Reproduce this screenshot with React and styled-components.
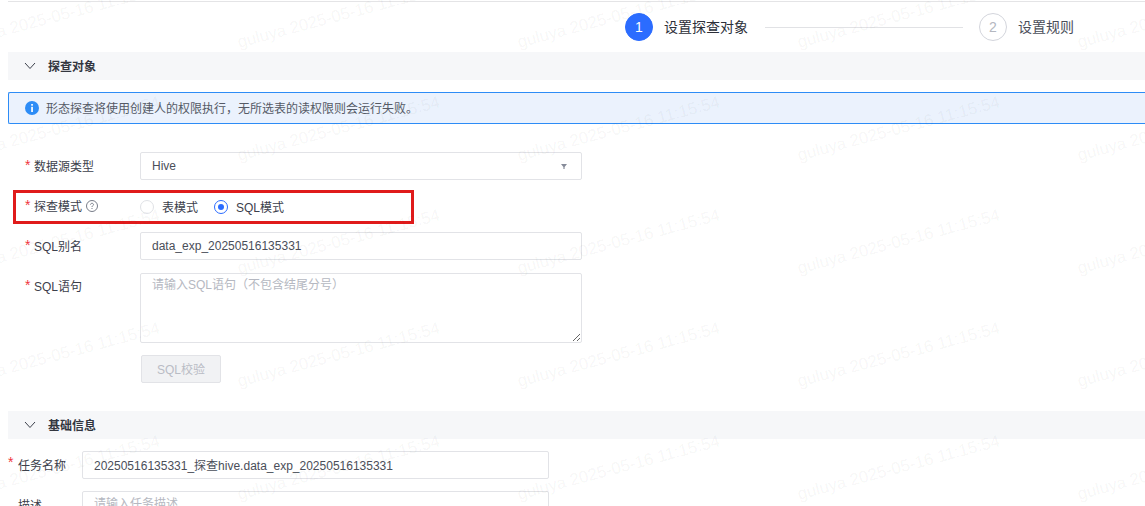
import React from 'react'
import styled, { createGlobalStyle } from 'styled-components'

const WATERMARK_COUNT = 25

const ChevronIcon = () => (
    <svg width="12" height="12" viewBox="0 0 12 12" fill="none">
        <path d="M1 3L6 8.5L11 3" stroke="#3c404b" strokeWidth="1" />
    </svg>
)

const InfoIcon = () => (
    <svg width="14" height="14" viewBox="0 0 14 14">
        <circle cx="7" cy="7" r="7" fill="#2d8cf6" />
        <rect x="6.2" y="3" width="1.7" height="1.7" fill="#fff" />
        <rect x="6.2" y="5.8" width="1.7" height="5.2" fill="#fff" />
    </svg>
)

const HelpIcon = () => (
    <svg width="12" height="12" viewBox="0 0 12 12" fill="none">
        <circle cx="6" cy="6" r="5.5" stroke="#777c88" />
        <path d="M4.5 4.7C4.5 3.9 5.1 3.3 6 3.3C6.9 3.3 7.5 3.9 7.5 4.6C7.5 5.6 6 5.7 6 7" stroke="#777c88" />
        <rect x="5.5" y="8" width="1" height="1" fill="#777c88" />
    </svg>
)

const CaretIcon = () => (
    <svg width="6" height="5" viewBox="0 0 6 5">
        <path d="M0 0H6L3.6 3V5H2.4V3Z" fill="#868b99" />
    </svg>
)

const Section = ({ title }) => (
    <SectionHead>
        <ChevronIcon />
        <SectionTitle>{title}</SectionTitle>
    </SectionHead>
)

const Field = ({ label, children }) => (
    <FormRow>
        <FieldLabel>
            <Star>*</Star>
            {label}
        </FieldLabel>
        {children}
    </FormRow>
)

export default function App() {
    return (
        <Page>
            <GlobalStyle />
            <TopLine />
            <Stepper>
                <StepCircle active>1</StepCircle>
                <StepLabel active>设置探查对象</StepLabel>
                <StepLine />
                <StepCircle>2</StepCircle>
                <StepLabel>设置规则</StepLabel>
            </Stepper>

            <Section title="探查对象" />
            <Alert>
                <InfoIcon />
                <AlertText>形态探查将使用创建人的权限执行，无所选表的读权限则会运行失败。</AlertText>
            </Alert>

            <Form>
                <Field label="数据源类型">
                    <SelectBox>
                        Hive
                        <CaretIcon />
                    </SelectBox>
                </Field>
                <ModeRow>
                    <RaisedLabel>
                        <Star>*</Star>
                        探查模式
                        <HelpWrap><HelpIcon /></HelpWrap>
                    </RaisedLabel>
                    <RadioGroup>
                        <RadioItem><Radio /><RadioText>表模式</RadioText></RadioItem>
                        <RadioItem><Radio checked /><RadioText>SQL模式</RadioText></RadioItem>
                    </RadioGroup>
                    <Highlight />
                </ModeRow>
                <Field label="SQL别名">
                    <TextInput readOnly value="data_exp_20250516135331" />
                </Field>
                <SqlRow>
                    <RaisedLabel>
                        <Star>*</Star>
                        SQL语句
                    </RaisedLabel>
                    <SqlArea placeholder="请输入SQL语句（不包含结尾分号）" />
                </SqlRow>
                <CheckButton disabled>SQL校验</CheckButton>
            </Form>

            <Section title="基础信息" />
            <BasicForm>
                <BasicRow>
                    <BasicLabel><BasicStar>*</BasicStar>任务名称</BasicLabel>
                    <BasicInput readOnly value="20250516135331_探查hive.data_exp_20250516135331" />
                </BasicRow>
                <BasicRow>
                    <BasicLabel>描述</BasicLabel>
                    <BasicInput placeholder="请输入任务描述" />
                </BasicRow>
            </BasicForm>

            <Watermarks>
                {Array.from({ length: WATERMARK_COUNT }, (_, i) => (
                    <WatermarkCell key={i}>
                        <WatermarkText>guluya 2025-05-16 11:15:54</WatermarkText>
                    </WatermarkCell>
                ))}
            </Watermarks>
        </Page>
    )
}

const GlobalStyle = createGlobalStyle`
    html, body {
        margin: 0;
        padding: 0;
        background: #fff;
    }
`;
const Page = styled.div`
    position: relative;
    width: 1145px;
    height: 506px;
    overflow: hidden;
    padding-left: 8px;
    box-sizing: border-box;
    font-family: 'Liberation Sans', 'Noto Sans CJK SC', sans-serif;
    font-size: 12px;
    color: #3c404b;
`;
const TopLine = styled.div`
    height: 1px;
    margin-top: 1px;
    background: #e4e4e6;
`;
const Stepper = styled.div`
    display: flex;
    align-items: center;
    height: 50px;
    padding-left: 617px;
`;
const StepCircle = styled.div`
    width: 28px;
    height: 28px;
    flex: none;
    box-sizing: border-box;
    border-radius: 50%;
    display: flex;
    align-items: center;
    justify-content: center;
    font-size: 14px;
    color: ${({ active }) => active ? '#fff' : '#b4b7c0'};
    background: ${({ active }) => active ? '#2b6cff' : '#fff'};
    border: 1px solid ${({ active }) => active ? '#2b6cff' : '#d3d5dc'};
`;
const StepLabel = styled.div`
    margin-left: 11px;
    padding-bottom: 2px;
    font-size: 14px;
    white-space: nowrap;
    color: ${({ active }) => active ? '#2c2f38' : '#4a4e59'};
`;
const StepLine = styled.div`
    width: 198px;
    height: 1px;
    margin: 0 16px 0 17px;
    background: #e1e2e5;
`;
const SectionHead = styled.div`
    display: flex;
    align-items: center;
    height: 28px;
    padding-left: 16px;
    background: #f6f7f9;
`;
const SectionTitle = styled.div`
    margin-left: 12px;
    padding-bottom: 2px;
    font-size: 12px;
    font-weight: 700;
    color: #33363f;
`;
const Alert = styled.div`
    display: flex;
    align-items: center;
    gap: 7px;
    height: 32px;
    margin-top: 12px;
    padding-left: 16px;
    box-sizing: border-box;
    border: 1px solid #2d8cf6;
    border-right: none;
    border-radius: 2px 0 0 2px;
    background: #ebf2fd;
    color: #555a66;
`;
const AlertText = styled.span`
    padding-bottom: 2px;
`;
const Form = styled.div`
    display: flex;
    flex-direction: column;
    padding: 28px 0 28px 17px;
`;
const FormRow = styled.div`
    display: flex;
    align-items: center;
    height: 28px;
`;
const ModeRow = styled(FormRow)`
    position: relative;
    height: 34px;
    margin: 10px 0 8px;
`;
const Highlight = styled.div`
    position: absolute;
    left: -12px;
    top: 0;
    width: 401px;
    height: 34px;
    box-sizing: border-box;
    border: 3px solid #e01b1b;
    pointer-events: none;
`;
const SqlRow = styled.div`
    display: flex;
    align-items: flex-start;
    margin-top: 13px;
`;
const FieldLabel = styled.div`
    display: flex;
    align-items: center;
    flex: none;
    width: 115px;
    height: 28px;
    padding-bottom: 2px;
    box-sizing: border-box;
    color: #3c404b;
    white-space: nowrap;
`;
const RaisedLabel = styled(FieldLabel)`
    padding-bottom: 4px;
`;
const Star = styled.span`
    width: 9px;
    font-size: 14px;
    line-height: 12px;
    color: #f0353c;
`;
const HelpWrap = styled.span`
    display: inline-flex;
    margin-left: 4px;
    margin-top: 1px;
`;
const controlBase = `
    box-sizing: border-box;
    width: 442px;
    border: 1px solid #e2e3e7;
    border-radius: 2px;
    background: transparent;
    font-family: 'Liberation Sans', 'Noto Sans CJK SC', sans-serif;
    font-size: 12px;
    color: #4a4e59;
    outline: none;
`;
const SelectBox = styled.div`
    ${controlBase}
    display: flex;
    align-items: center;
    justify-content: space-between;
    height: 28px;
    padding: 0 14px 0 11px;
`;
const TextInput = styled.input`
    ${controlBase}
    height: 28px;
    padding: 0 11px;
`;
const SqlArea = styled.textarea`
    ${controlBase}
    display: block;
    height: 70px;
    padding: 3px 11px;
    line-height: 16px;
    &::placeholder {
        color: #b5b8c1;
    }
`;
const RadioGroup = styled.div`
    display: flex;
    align-items: center;
    gap: 16px;
`;
const RadioItem = styled.div`
    display: flex;
    align-items: center;
    gap: 8px;
    color: #3c404b;
`;
const RadioText = styled.span`
    padding-bottom: 2px;
`;
const Radio = styled.span`
    position: relative;
    width: 14px;
    height: 14px;
    box-sizing: border-box;
    border-radius: 50%;
    border: 1px solid ${({ checked }) => checked ? '#2b6cff' : '#e0e2e6'};
    &::after {
        content: "";
        display: ${({ checked }) => checked ? 'block' : 'none'};
        width: 6px;
        height: 6px;
        margin: 3px;
        border-radius: 50%;
        background: #2b6cff;
    }
`;
const CheckButton = styled.button`
    width: 80px;
    height: 28px;
    margin: 12px 0 0 116px;
    padding: 0 0 2px;
    border: 1px solid #e2e3e7;
    border-radius: 2px;
    background: #f1f2f4;
    color: #b9bcc5;
    font-family: inherit;
    font-size: 12px;
`;
const BasicForm = styled.div`
    display: flex;
    flex-direction: column;
    gap: 12px;
    padding-top: 12px;
`;
const BasicRow = styled.div`
    display: flex;
    align-items: center;
    height: 28px;
`;
const BasicLabel = styled.div`
    position: relative;
    flex: none;
    width: 74px;
    padding: 0 0 2px 10px;
    box-sizing: border-box;
    color: #3c404b;
`;
const BasicStar = styled.span`
    position: absolute;
    left: 0;
    top: -1px;
    font-size: 14px;
    line-height: 14px;
    color: #f0353c;
`;
const BasicInput = styled.input`
    ${controlBase}
    width: 467px;
    height: 28px;
    padding: 0 11px 2px;
    &::placeholder {
        color: #b5b8c1;
    }
`;
const Watermarks = styled.div`
    position: absolute;
    left: -42px;
    top: 35px;
    display: grid;
    grid-template-columns: repeat(5, 280px);
    grid-auto-rows: 113px;
    pointer-events: none;
`;
const WatermarkCell = styled.div`
    height: 113px;
`;
const WatermarkText = styled.div`
    width: max-content;
    font-family: 'Liberation Sans', sans-serif;
    font-size: 16.8px;
    line-height: 16px;
    color: rgba(40, 44, 60, 0.055);
    transform-origin: 0 50%;
    transform: rotate(-15deg);
`;
